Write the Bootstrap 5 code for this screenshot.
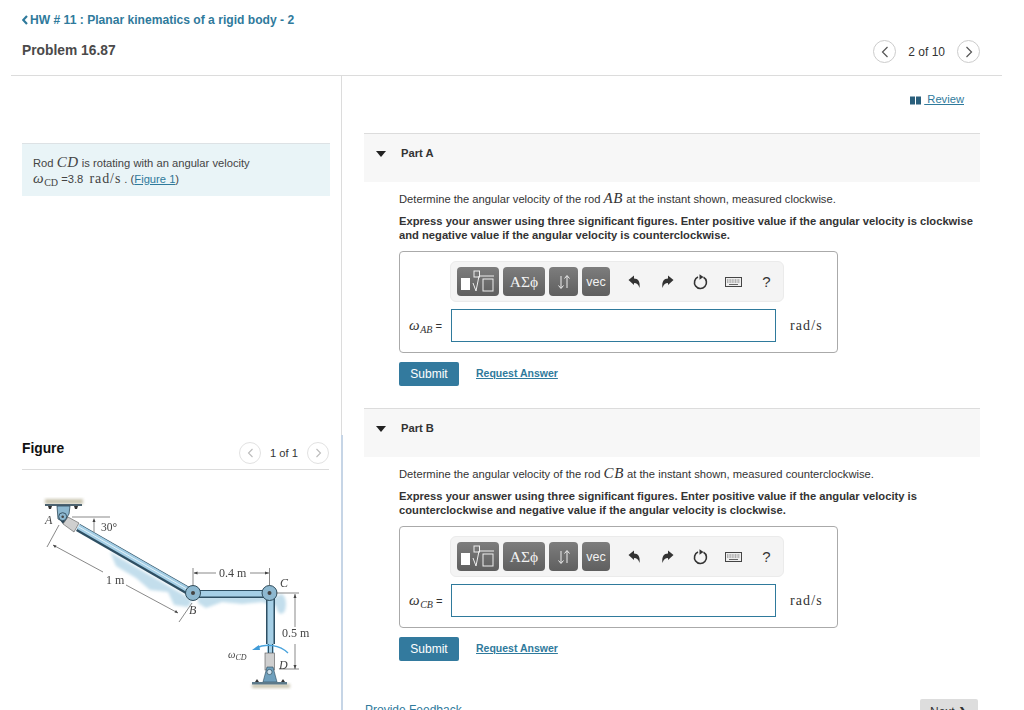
<!DOCTYPE html>
<html lang="en"><head><meta charset="utf-8"><title>Problem 16.87</title>
<link href="https://cdn.jsdelivr.net/npm/bootstrap@5.3.0/dist/css/bootstrap.min.css" rel="stylesheet">
<style>
html,body{height:710px;overflow:hidden;background:#fff}
body{font-family:"Liberation Sans",Arial,sans-serif;font-size:11.2px;color:#333;line-height:14px}
a{color:#2f7a9c}
.mth{font-family:"Liberation Serif",serif;font-size:14px;letter-spacing:.9px;line-height:0}
.mth-i{font-family:"Liberation Serif",serif;font-style:italic;font-size:15px;letter-spacing:.6px;line-height:0}
.pagehead{height:76px;margin:0 22px 0 11px;border-bottom:1px solid #dcdcdc;padding:13px 22px 0 11px}
.backlink{font-size:12.1px;font-weight:700;color:#2f7a9c;line-height:14px}
.backlink svg{margin-right:2px;vertical-align:-1px}
.probname{font-size:13.8px;font-weight:700;color:#4a4a4a;line-height:16px;margin-top:16px}
.pgr{font-size:11.2px;color:#333}
.pgr-lg{font-size:12px}
.circ{width:23px;height:23px;border:1px solid #ccc;border-radius:50%;background:#fff}
.pgrtxt{margin:0 12px}
.leftcol{width:331px;margin-left:11px;flex:none}
.lefttop{height:359px;border-right:1px solid #dcdcdc;padding:67px 11px 0 11px}
.stem{background:#e9f4f7;border-top:1px solid #dde2e5;padding:11px 11px 0;height:53px;width:308px;color:#444;line-height:16px}
.figblock{height:275px;border-right:2px solid #c6d5e6;padding:0 10px 0 11px;margin-right:-1px}
.fighead{height:35px;border-bottom:1px solid #dcdcdc;width:307px}
.figtitle{font-size:13.8px;font-weight:700;color:#111;line-height:16px;padding-top:6px}
.figpgr{margin-top:7px;gap:9px}
.circ-s{width:22px;height:22px;border:1px solid #e2e2e2;border-radius:50%}
.rightcol{width:616px;margin-left:22px;flex:none}
.reviewrow{height:57px;padding:16px 16px 0 0;text-align:right}
.revicon{margin-right:3px}
.partbar{height:49px;background:#f7f7f7;border-top:1px solid #dcdcdc;padding:12px 0 0 12px;font-weight:700;color:#333}
.caret{width:0;height:0;border-left:5px solid transparent;border-right:5px solid transparent;border-top:6px solid #222;margin-top:5px;margin-right:15px}
.partbody{padding:10px 0 0 35px;height:226px}
.instr{font-weight:700;color:#333;margin-top:8px}
.ansbox{width:439px;height:102px;border:1px solid #aaa;border-radius:4px;margin-top:9px;padding:9px 0 0 50px;position:relative}
.tbar{width:334px;height:41px;background:#f4f4f4;border:1px solid #ebebeb;border-radius:6px;padding:5px 0 0 6px;gap:4px}
.tbtn{height:29px;background:linear-gradient(#7d7d7d,#5f5f5f);border-radius:4px;color:#f2f2f2;font-size:13px}
.tbtn-a{width:42px}.tbtn-b{width:42px;font-family:"Liberation Serif",serif;font-size:15.500px}
.tbtn-c{width:29px}.tbtn-d{width:28px;font-size:12.500px}
.tool{width:33px;color:#333;font-size:15px}
.tool-wrap{margin-left:4px;height:29px}
.eqrow{margin-top:7px;margin-left:-41px}
.eqlabel{width:42px;color:#333}
.ansin{width:325px;height:33px;border:1px solid #2f7a9c;background:#fff;display:block;padding:0}
.unit{font-family:"Liberation Serif",serif;font-size:14px;letter-spacing:1.100px;margin-left:14px;color:#333}
.subbtn{width:60px;height:24px;background:#337a9e;color:#fff;border-radius:2px;font-size:12px;border:0;padding:0;--bs-btn-hover-bg:#337a9e}
.reqa{font-weight:700;margin-left:17px;font-size:10.500px;line-height:12px;margin-bottom:2px}
.actions{margin-top:9px}
.foot{padding:0 2px 0 1px;font-size:12px}
.nextb{width:58px;height:24px;background:#ddd;border-radius:2px;color:#333;text-align:center;padding-top:6px}
.fbk{margin-top:4px}
sub{font-size:10px;bottom:-.3em;letter-spacing:0;line-height:0}
.figsvg{font-family:"Liberation Serif",serif}
</style></head>
<body>
<div class="pagehead d-flex justify-content-between">
  <div>
    <div class="backlink"><svg width="6" height="10" viewBox="0 0 6 10"><path d="M5 1 1.200 5 5 9" fill="none" stroke="#2f7a9c" stroke-width="2.200"/></svg>HW # 11 : Planar kinematics of a rigid body - 2</div>
    <div class="probname">Problem 16.87</div>
  </div>
  <div class="d-flex align-items-center pgr pgr-lg align-self-start" style="margin-top:27px">
    <span class="circ d-flex align-items-center justify-content-center"><svg width="8" height="12" viewBox="0 0 8 12"><path d="M6.500 1 1.500 6l5 5" fill="none" stroke="#555" stroke-width="1.200"/></svg></span>
    <span class="pgrtxt">2 of 10</span>
    <span class="circ d-flex align-items-center justify-content-center"><svg width="8" height="12" viewBox="0 0 8 12"><path d="M1.500 1l5 5-5 5" fill="none" stroke="#555" stroke-width="1.200"/></svg></span>
  </div>
</div>
<div class="d-flex">
  <div class="leftcol">
    <div class="lefttop">
      <div class="stem">Rod <span class="mth-i">CD</span> is rotating with an angular velocity<br><span class="mth-i">ω</span><span class="mth"><sub>CD</sub></span> =3.8&nbsp;&nbsp;<span class="mth">rad/s</span> . (<a href="#">Figure 1</a>)</div>
    </div>
    <div class="figblock">
      <div class="fighead d-flex justify-content-between align-items-start">
        <div class="figtitle">Figure</div>
        <div class="d-flex align-items-center pgr figpgr">
          <span class="circ-s d-flex align-items-center justify-content-center"><svg width="7" height="10" viewBox="0 0 7 10"><path d="M5.500 1l-4 4 4 4" fill="none" stroke="#bbb" stroke-width="1.100"/></svg></span>
          <span>1 of 1</span>
          <span class="circ-s d-flex align-items-center justify-content-center"><svg width="7" height="10" viewBox="0 0 7 10"><path d="M1.500 1l4 4-4 4" fill="none" stroke="#bbb" stroke-width="1.100"/></svg></span>
        </div>
      </div>
      <svg class="d-block figsvg" width="310" height="220" viewBox="22 470 310 220" aria-label="Rod mechanism">
        <defs>
          <filter id="bl" x="-20%" y="-40%" width="140%" height="180%"><feGaussianBlur stdDeviation="1.800"/></filter>
          <filter id="soft" x="-5%" y="-5%" width="110%" height="110%"><feGaussianBlur stdDeviation=".35"/></filter>
        </defs>
        <g fill="#c3deec" filter="url(#bl)">
          <path d="M110 552 L186 596 L192 601 L188 607 L174 605 L168 592 L150 590 L136 578 L116 566Z"/>
          <path d="M198 596H268L284 596 285 612 276 606 262 602 242 604 222 602 206 608 198 603Z"/>
          <ellipse cx="281" cy="604" rx="5" ry="10"/>
        </g>
        <g filter="url(#soft)">
          <rect x="45" y="499" width="38" height="5" fill="#c9c5b0" filter="url(#bl)"/>
          <rect x="252" y="684" width="38" height="4" fill="#c9c5b0" filter="url(#bl)"/>
          <!-- top mount -->
          <rect x="45" y="504" width="37" height="2" fill="#4d6470"/>
          <path d="M48 506h4l-1 3h-2zM74 506h4l-1 3h-2z" fill="#333"/>
          <path d="M57 506H70L69 514 64 522 58 519Z" fill="#8db8d0" stroke="#2e4a5a" stroke-width=".8"/>
          <!-- rod AB -->
          <path d="M78 527.500 191 592.500" stroke="#2e4f63" stroke-width="8" fill="none"/>
          <path d="M78 526.500 191 591.500" stroke="#a5cfe6" stroke-width="5" fill="none"/>
          <path d="M78 526.500 191 591.500" stroke="#e3f1f8" stroke-width="1" fill="none"/>
          <path d="M59 519 68 517 63 524Z" fill="#2e4a5a"/>
          <path d="M68 517 79 523 74 532 63 524Z" fill="#cfcfcf" stroke="#555" stroke-width=".6"/>
          <circle cx="62.700" cy="516.700" r="4" fill="#8db8d0" stroke="#2e4a5a" stroke-width=".9"/><circle cx="62.700" cy="516.700" r="1.300" fill="#444"/>
          <!-- rod BC -->
          <rect x="195" y="590" width="74" height="8" fill="#2e4f63"/><rect x="195" y="591" width="74" height="5.500" fill="#a5cfe6"/>
          <!-- rod CD -->
          <rect x="266" y="598" width="9" height="46" fill="#2e4f63"/><rect x="267.500" y="598" width="6" height="46" fill="#a5cfe6"/>
          <rect x="267" y="644" width="7" height="9" fill="#a5cfe6"/><path d="M268.500 644v9M272.500 644v9" stroke="#2e4f63"/>
          <rect x="265" y="653" width="9.500" height="17" fill="#cfcfcf" stroke="#555" stroke-width=".6"/>
          <!-- joints -->
          <circle cx="193" cy="593" r="7.500" fill="#8db8d0" stroke="#2e4a5a" stroke-width="1"/><circle cx="193" cy="593" r="2" fill="#444"/>
          <circle cx="269.500" cy="593" r="7.500" fill="#8db8d0" stroke="#2e4a5a" stroke-width="1"/><circle cx="269.500" cy="593" r="2" fill="#444"/>
          <!-- base D -->
          <path d="M263 682 267 667H273L277 682Z" fill="#6fa0bd" stroke="#2e4a5a" stroke-width=".6"/>
          <circle cx="269.500" cy="672" r="2.600" fill="#cfe2ee" stroke="#2e4a5a" stroke-width=".7"/>
          <rect x="252" y="682" width="35" height="2.500" fill="#5c7a8a"/>
          <path d="M255 682l2-3 2 3zM281 682l2-3 2 3z" fill="#333"/>
          <!-- arrow -->
          <path d="M288 653C280 645 266 643 256 648" fill="none" stroke="#4aa3dc" stroke-width="1.400"/>
          <path d="M252 650 259 645 260 650Z" fill="#3f9bd8"/>
          <!-- dims -->
          <g stroke="#555" stroke-width=".7" fill="none">
            <path d="M72 517H110M94 520V532"/>
            <path d="M59 525 47 547M53 545 103 572M126 585 178 613M192 603 179 622"/>
            <path d="M193 568V586M269.500 568V586M194 573H216M250 573H269"/>
            <path d="M276 593H299M295 594V627M295 644V669M279 669H299"/>
          </g>
          <path d="M94 518l-1.500 4h3zM193.500 573l4-1.500v3zM269 573l-4-1.500v3zM295 594l-1.500 4h3zM295 669l-1.500-4h3zM53 545l3.500.6-1.500 2.500zM178 613l-3.500-.6 1.500-2.500z" fill="#444"/>
          <g fill="#444" font-size="12">
            <text x="45" y="524" font-style="italic">A</text>
            <text x="101" y="531" font-size="11.500">30°</text>
            <text x="106" y="584">1 m</text>
            <text x="219" y="577">0.4 m</text>
            <text x="189" y="614" font-style="italic">B</text>
            <text x="280" y="587" font-style="italic">C</text>
            <text x="282" y="637">0.5 m</text>
            <text x="279" y="669" font-style="italic">D</text>
            <text x="228" y="658" font-style="italic" font-size="10.500">ω<tspan font-size="8" dy="2">CD</tspan></text>
          </g>
        </g>
      </svg>
    </div>
  </div>
  <div class="rightcol">
    <div class="reviewrow"><svg class="revicon" width="11" height="9" viewBox="0 0 11 9"><path d="M0 .5h5v8H0zM6 .5h5v8H6z" fill="#2a5f7c"/></svg><a href="#">&nbsp;Review</a></div>

    <div class="partbar d-flex align-items-start"><span class="caret"></span><span>Part A</span></div>
    <div class="partbody">
      <div>Determine the angular velocity of the rod <span class="mth-i">AB</span> at the instant shown, measured clockwise.</div>
      <div class="instr">Express your answer using three significant figures. Enter positive value if the angular velocity is clockwise and negative value if the angular velocity is counterclockwise.</div>
      <div class="ansbox">
        <div class="tbar d-flex">
          <span class="tbtn tbtn-a d-flex align-items-center justify-content-center"><svg width="36" height="24" viewBox="0 0 36 24"><rect x="1" y="8" width="9" height="12" fill="#fff"/><rect x="14" y="1" width="5.500" height="6" fill="none" stroke="#eee"/><path d="M13 13l3 8 3-15h15" fill="none" stroke="#eee"/><rect x="23" y="9" width="10" height="12" fill="none" stroke="#eee"/></svg></span>
          <span class="tbtn tbtn-b d-flex align-items-center justify-content-center">ΑΣϕ</span>
          <span class="tbtn tbtn-c d-flex align-items-center justify-content-center"><svg width="14" height="16" viewBox="0 0 14 16"><path d="M4 2v12M1.500 11.500 4 14.500l2.500-3M10 14V2M7.500 4.500 10 1.500l2.500 3" fill="none" stroke="#eee" stroke-width="1"/></svg></span>
          <span class="tbtn tbtn-d d-flex align-items-center justify-content-center">vec</span>
          <div class="d-flex align-items-center tool-wrap">
            <span class="tool d-flex justify-content-center"><svg width="13" height="14" viewBox="0 0 13 14"><path d="M.5 5 6 .5V3.500C10 3.500 12.500 6.500 11.500 13 10.500 9.500 9 8 6 8V10Z" fill="#333"/></svg></span>
            <span class="tool d-flex justify-content-center"><svg width="13" height="14" viewBox="0 0 13 14"><path d="M12.500 5 7 .5V3.500C3 3.500 .5 6.500 1.500 13 2.500 9.500 4 8 7 8V10Z" fill="#333"/></svg></span>
            <span class="tool d-flex justify-content-center"><svg width="16" height="16" viewBox="0 0 16 16"><path d="M10.500 3.300A6 6 0 1 1 5 3" fill="none" stroke="#333" stroke-width="1.600"/><path d="M5.500 0 9.500 2.800 5.500 5.500Z" fill="#333" transform="translate(1 .2)"/></svg></span>
            <span class="tool d-flex justify-content-center"><svg width="17" height="10" viewBox="0 0 17 10"><rect x=".5" y=".5" width="16" height="9" fill="#eee" stroke="#444"/><path d="M2 3h13M2 5h13" stroke="#777" stroke-dasharray="1 .6"/><path d="M4 7.500h9" stroke="#666"/></svg></span>
            <span class="tool text-center">?</span>
          </div>
        </div>
        <div class="d-flex align-items-center eqrow">
          <span class="eqlabel"><span class="mth-i">ω</span><span class="mth-i"><sub>AB</sub></span> =</span>
          <input class="ansin" type="text" aria-label="answer AB">
          <span class="unit">rad/s</span>
        </div>
      </div>
      <div class="d-flex align-items-center actions"><button class="btn subbtn">Submit</button><a class="reqa" href="#">Request Answer</a></div>
    </div>

    <div class="partbar d-flex align-items-start"><span class="caret"></span><span>Part B</span></div>
    <div class="partbody">
      <div>Determine the angular velocity of the rod <span class="mth-i">CB</span> at the instant shown, measured counterclockwise.</div>
      <div class="instr">Express your answer using three significant figures. Enter positive value if the angular velocity is counterclockwise and negative value if the angular velocity is clockwise.</div>
      <div class="ansbox">
        <div class="tbar d-flex">
          <span class="tbtn tbtn-a d-flex align-items-center justify-content-center"><svg width="36" height="24" viewBox="0 0 36 24"><rect x="1" y="8" width="9" height="12" fill="#fff"/><rect x="14" y="1" width="5.500" height="6" fill="none" stroke="#eee"/><path d="M13 13l3 8 3-15h15" fill="none" stroke="#eee"/><rect x="23" y="9" width="10" height="12" fill="none" stroke="#eee"/></svg></span>
          <span class="tbtn tbtn-b d-flex align-items-center justify-content-center">ΑΣϕ</span>
          <span class="tbtn tbtn-c d-flex align-items-center justify-content-center"><svg width="14" height="16" viewBox="0 0 14 16"><path d="M4 2v12M1.500 11.500 4 14.500l2.500-3M10 14V2M7.500 4.500 10 1.500l2.500 3" fill="none" stroke="#eee" stroke-width="1"/></svg></span>
          <span class="tbtn tbtn-d d-flex align-items-center justify-content-center">vec</span>
          <div class="d-flex align-items-center tool-wrap">
            <span class="tool d-flex justify-content-center"><svg width="13" height="14" viewBox="0 0 13 14"><path d="M.5 5 6 .5V3.500C10 3.500 12.500 6.500 11.500 13 10.500 9.500 9 8 6 8V10Z" fill="#333"/></svg></span>
            <span class="tool d-flex justify-content-center"><svg width="13" height="14" viewBox="0 0 13 14"><path d="M12.500 5 7 .5V3.500C3 3.500 .5 6.500 1.500 13 2.500 9.500 4 8 7 8V10Z" fill="#333"/></svg></span>
            <span class="tool d-flex justify-content-center"><svg width="16" height="16" viewBox="0 0 16 16"><path d="M10.500 3.300A6 6 0 1 1 5 3" fill="none" stroke="#333" stroke-width="1.600"/><path d="M5.500 0 9.500 2.800 5.500 5.500Z" fill="#333" transform="translate(1 .2)"/></svg></span>
            <span class="tool d-flex justify-content-center"><svg width="17" height="10" viewBox="0 0 17 10"><rect x=".5" y=".5" width="16" height="9" fill="#eee" stroke="#444"/><path d="M2 3h13M2 5h13" stroke="#777" stroke-dasharray="1 .6"/><path d="M4 7.500h9" stroke="#666"/></svg></span>
            <span class="tool text-center">?</span>
          </div>
        </div>
        <div class="d-flex align-items-center eqrow">
          <span class="eqlabel"><span class="mth-i">ω</span><span class="mth-i"><sub>CB</sub></span> =</span>
          <input class="ansin" type="text" aria-label="answer CB">
          <span class="unit">rad/s</span>
        </div>
      </div>
      <div class="d-flex align-items-center actions"><button class="btn subbtn">Submit</button><a class="reqa" href="#">Request Answer</a></div>
    </div>
    <div class="d-flex justify-content-between align-items-start foot mt-3"><a class="fbk" href="#">Provide Feedback</a><span class="nextb">Next ❯</span></div>
  </div>
</div>
</body></html>
